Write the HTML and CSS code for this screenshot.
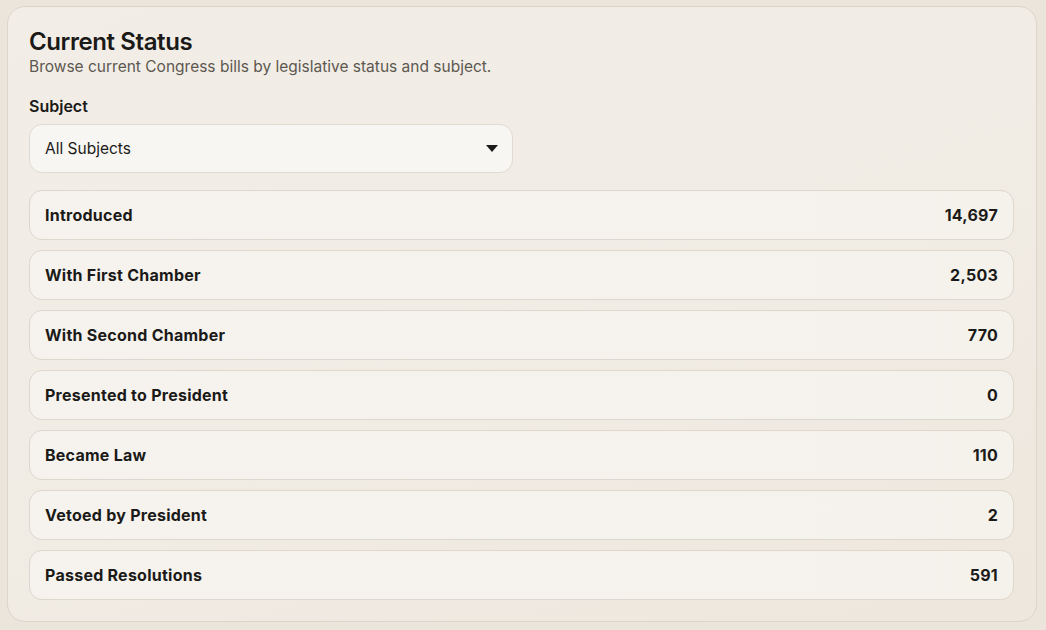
FILE: index.html
```html
<!DOCTYPE html>
<html lang="en">
<head>
<meta charset="utf-8">
<title>Current Status</title>
<link rel="stylesheet" href="styles.css">
</head>
<body>
<section class="card">
  <h1 class="title">Current Status</h1>
  <p class="subtitle">Browse current Congress bills by legislative status and subject.</p>
  <label class="label">Subject</label>
  <div class="select">
    <span>All Subjects</span>
    <svg class="caret" width="12" height="7" viewBox="0 0 12 7"><path d="M0 0H12L6 7Z" fill="#1a1a1a"/></svg>
  </div>
  <ul class="rows">
    <li class="row"><span>Introduced</span><span>14,697</span></li>
    <li class="row"><span>With First Chamber</span><span>2,503</span></li>
    <li class="row"><span>With Second Chamber</span><span>770</span></li>
    <li class="row"><span>Presented to President</span><span>0</span></li>
    <li class="row"><span>Became Law</span><span>110</span></li>
    <li class="row"><span>Vetoed by President</span><span>2</span></li>
    <li class="row"><span>Passed Resolutions</span><span>591</span></li>
  </ul>
</section>
</body>
</html>
```
FILE: styles.css
```css
* { box-sizing: border-box; }
html, body { margin: 0; }
body {
  background: #ebe5db;
  font-family: Inter, "Noto Sans", sans-serif;
  color: #1b1a18;
  padding: 6px 9px 8px 7px;
}
.card {
  height: 616px;
  border: 1px solid #dcd5ca;
  border-radius: 18px;
  background: linear-gradient(160deg, #f2eee7 0%, #f0ebe3 60%, #ede7dd 100%);
  padding: 20px 22px 21px 21px;
  display: flex;
  flex-direction: column;
}
.title {
  margin: 0;
  font-size: 24px;
  line-height: 30px;
  font-weight: 600;
  letter-spacing: -0.4px;
}
.subtitle {
  margin: 0;
  font-size: 15.5px;
  line-height: 20px;
  color: #5d5850;
  letter-spacing: 0;
}
.label {
  margin-top: 19px;
  font-size: 16px;
  line-height: 20px;
  font-weight: 600;
  letter-spacing: 0;
}
.select {
  margin-top: 8px;
  width: 484px;
  height: 49px;
  border: 1px solid #e0dad0;
  border-radius: 13px;
  background: #f8f6f2;
  display: flex;
  align-items: center;
  justify-content: space-between;
  padding: 0 14px 0 15px;
  font-size: 15.5px;
  letter-spacing: 0;
}
.caret { display: block; }
.rows {
  list-style: none;
  margin: 17px 0 0;
  padding: 0;
  display: flex;
  flex-direction: column;
  gap: 10px;
}
.row {
  height: 50px;
  border: 1px solid #ddd7cd;
  border-radius: 13px;
  background: linear-gradient(90deg, #f6f3ee 0%, #f5f2ec 100%);
  display: flex;
  align-items: center;
  justify-content: space-between;
  padding: 0 15px;
  font-size: 16px;
  font-weight: 700;
  letter-spacing: 0.25px;
}
```
